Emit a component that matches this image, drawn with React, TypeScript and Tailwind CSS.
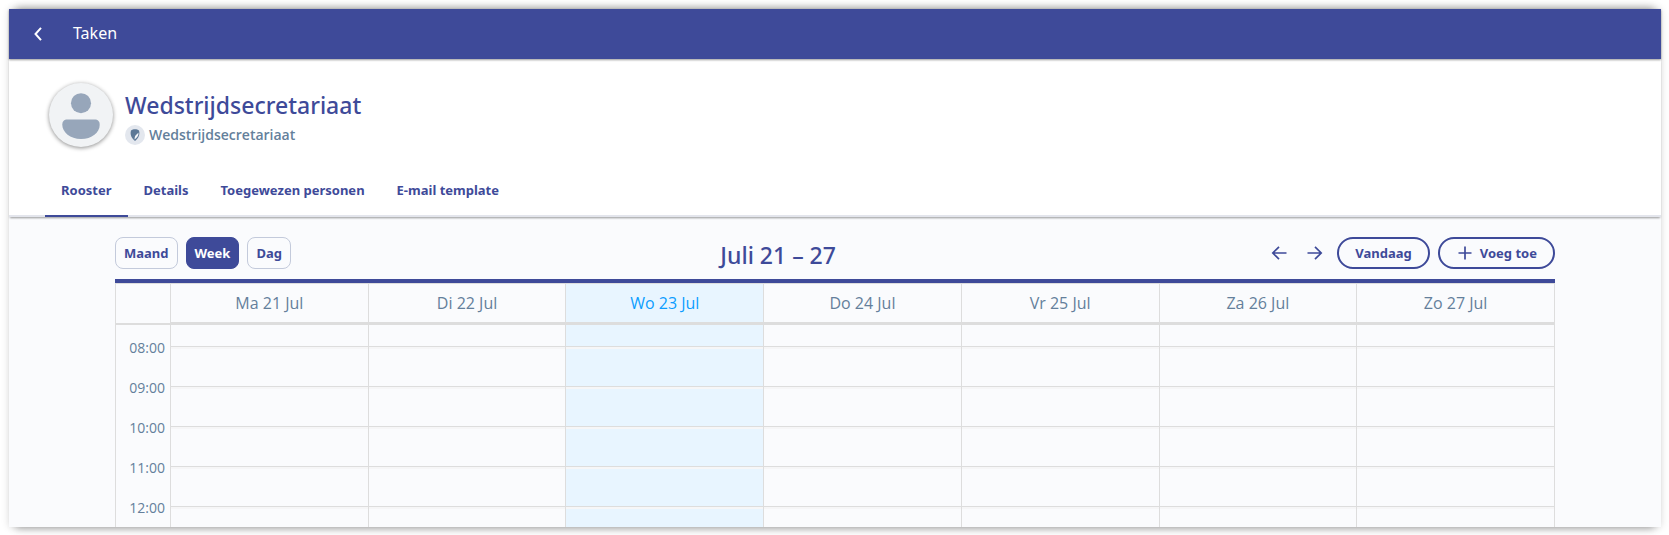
import { useState } from 'react';
import clsx from 'clsx';

const tabs = ['Rooster', 'Details', 'Toegewezen personen', 'E-mail template'];

const views = ['Maand', 'Week', 'Dag'];

const days = [
    { label: 'Ma 21 Jul', today: false },
    { label: 'Di 22 Jul', today: false },
    { label: 'Wo 23 Jul', today: true },
    { label: 'Do 24 Jul', today: false },
    { label: 'Vr 25 Jul', today: false },
    { label: 'Za 26 Jul', today: false },
    { label: 'Zo 27 Jul', today: false },
];

const hours = ['08:00', '09:00', '10:00', '11:00', '12:00'];

function Avatar() {
    return (
        <div className="size-16 shrink-0 rounded-full bg-[#f1f3f5] shadow-[0_1px_4px_rgba(0,0,0,0.45)]">
            <svg viewBox="0 0 65 65" className="size-full" fill="#97a6ba" aria-hidden="true">
                <circle cx="32.5" cy="20.5" r="10.2" />
                <path d="M19 37h27c4 0 5.500 2 5.500 5.500c0 8-8 14.500-19 14.500S13.500 50 13.500 42.500C13.500 39 15 37 19 37z" />
            </svg>
        </div>
    );
}

function ShieldIcon() {
    return (
        <span className="flex size-5 shrink-0 items-center justify-center rounded-full bg-[#e3e7ee]">
            <svg viewBox="0 0 12 14" className="h-3.5 w-3" aria-hidden="true">
                <path d="M2 2.500C4 .8 8 .8 10 2.500C11 6 10 10 6 13C2 10 1 6 2 2.500z" fill="#5c7896" />
                <path d="M9.500 4.500C8 6.500 5.500 7 5.600 11.500C8 9.500 9.800 8 9.500 4.500z" fill="#f4f6f9" />
            </svg>
        </span>
    );
}

function Header() {
    return (
        <header className="relative z-10 flex h-[50px] shrink-0 items-center bg-[#3e4a99] px-5 text-white shadow-[0_1px_2px_rgba(0,0,0,0.4)]">
            <button type="button" aria-label="Terug" className="flex h-8 w-[18px] items-center justify-center">
                <svg viewBox="0 0 8 14" className="h-3.5 w-2" fill="none" stroke="currentColor" strokeWidth="2" aria-hidden="true">
                    <path d="M7 .8L1.500 7L7 13.200" />
                </svg>
            </button>
            <span className="ml-[26px] pb-0.5 font-['Noto_Sans',sans-serif] text-base">Taken</span>
        </header>
    );
}

export default function App() {
    const [tab, setTab] = useState('Rooster');
    const [view, setView] = useState('Week');

    return (
        <div className="h-screen bg-white px-2 pt-[9px] pb-2 pl-[9px] font-['Open_Sans',sans-serif] text-[#3e4a99]">
            <div className="flex h-full flex-col bg-[#fafbfd] shadow-[0_0_8px_rgba(0,0,0,0.14),0_-8px_8px_-7px_rgba(0,0,0,0.35),0_8px_8px_-7px_rgba(0,0,0,0.35)]">
                <Header />

                {/* Profile and tabs */}
                <section className="shrink-0 bg-white shadow-[0_2px_2px_-1px_rgba(0,0,0,0.4)]">
                    <div className="flex items-center gap-3 px-10 pt-[23px]">
                        <Avatar />
                        <div className="pt-1.5">
                            <h1 className="font-['Noto_Sans',sans-serif] text-[23px] leading-[34px] font-medium">
                                Wedstrijdsecretariaat
                            </h1>
                            <p className="flex items-center gap-1 text-sm leading-[26px] font-semibold text-[#647f9b]">
                                <ShieldIcon />
                                Wedstrijdsecretariaat
                            </p>
                        </div>
                    </div>
                    <nav className="mt-[15px] flex border-b-2 border-[#e3e5ec] px-9 font-['Noto_Sans',sans-serif]">
                        {tabs.map((item) => (
                            <button
                                key={item}
                                type="button"
                                onClick={() => setTab(item)}
                                className={clsx(
                                    '-mb-0.5 h-[54px] border-b-2 px-4 pt-1 text-[13px] font-bold',
                                    tab === item ? 'border-[#3e4a99]' : 'border-transparent'
                                )}
                            >
                                {item}
                            </button>
                        ))}
                    </nav>
                </section>

                {/* Calendar */}
                <main className="min-h-0 flex-1 overflow-hidden px-6 pt-5">
                    <div className="mx-auto max-w-[1440px]">
                        <div className="mb-2.5 flex items-center justify-between font-['Noto_Sans',sans-serif]">
                            <div className="flex gap-2">
                                {views.map((item) => (
                                    <button
                                        key={item}
                                        type="button"
                                        onClick={() => setView(item)}
                                        className={clsx(
                                            'h-8 rounded-lg border px-2 pt-0.5 text-[13px] font-bold',
                                            view === item
                                                ? 'border-[#3e4a99] bg-[#3e4a99] text-white'
                                                : 'border-[#c3cadb]'
                                        )}
                                    >
                                        {item}
                                    </button>
                                ))}
                            </div>
                            <h2 className="h-8 text-[23px] leading-9 font-medium">Juli 21 – 27</h2>
                            <div className="flex items-center gap-2">
                                <button type="button" aria-label="Vorige" className="flex h-8 w-7 items-center justify-center">
                                    <svg viewBox="0 0 16 14" className="h-3.5 w-4" fill="none" stroke="currentColor" strokeWidth="1.7" aria-hidden="true">
                                        <path d="M15.500 7H1.500M8 .8L1.800 7L8 13.200" />
                                    </svg>
                                </button>
                                <button type="button" aria-label="Volgende" className="flex h-8 w-7 items-center justify-center">
                                    <svg viewBox="0 0 16 14" className="h-3.5 w-4" fill="none" stroke="currentColor" strokeWidth="1.7" aria-hidden="true">
                                        <path d="M.5 7H14.500M8 .8L14.200 7L8 13.200" />
                                    </svg>
                                </button>
                                <button type="button" className="h-8 rounded-full border-2 border-[#3e4a99] px-4 pt-0.5 text-[13px] font-bold">
                                    Vandaag
                                </button>
                                <button type="button" className="flex h-8 items-center gap-1.5 rounded-full border-2 border-[#3e4a99] px-4 text-[13px] font-bold">
                                    <svg viewBox="0 0 18 14" className="h-3.5 w-[18px]" fill="none" stroke="currentColor" strokeWidth="1.7" aria-hidden="true">
                                        <path d="M9 .5v13M2.500 7h13" />
                                    </svg>
                                    <span className="pt-0.5">Voeg toe</span>
                                </button>
                            </div>
                        </div>

                        <table className="w-full table-fixed border-separate border-spacing-0 border-t-4 border-t-[#3e4a99] text-[#647f9b]">
                            <thead>
                                <tr className="h-[42px]">
                                    <td className="w-14 border border-b-2 border-[#dddddd] p-0" />
                                    {days.map((day) => (
                                        <th
                                            key={day.label}
                                            scope="col"
                                            className={clsx(
                                                'border-t border-r border-b-3 border-[#dddddd] p-0 text-base font-normal',
                                                day.today && 'bg-[#e8f5ff] text-[#0c9dff]'
                                            )}
                                        >
                                            {day.label}
                                        </th>
                                    ))}
                                </tr>
                            </thead>
                            <tbody>
                                <tr className="h-[21px]">
                                    <td className="border-x border-[#dddddd] p-0" />
                                    {days.map((day) => (
                                        <td key={day.label} className={clsx('border-r border-[#dddddd] p-0', day.today && 'bg-[#e8f5ff]')} />
                                    ))}
                                </tr>
                                {hours.map((hour) => (
                                    <tr key={hour} className="h-10">
                                        <th
                                            scope="row"
                                            className="border-x border-[#dddddd] p-0 pr-[5px] text-right align-top text-sm leading-1 font-normal"
                                        >
                                            {hour}
                                        </th>
                                        {days.map((day) => (
                                            <td
                                                key={day.label}
                                                className={clsx(
                                                    'border-t border-r border-[#dddddd] p-0 shadow-[inset_0_2px_0_#f6f6f7]',
                                                    day.today && 'bg-[#e8f5ff]'
                                                )}
                                            />
                                        ))}
                                    </tr>
                                ))}
                            </tbody>
                        </table>
                    </div>
                </main>
            </div>
        </div>
    );
}
